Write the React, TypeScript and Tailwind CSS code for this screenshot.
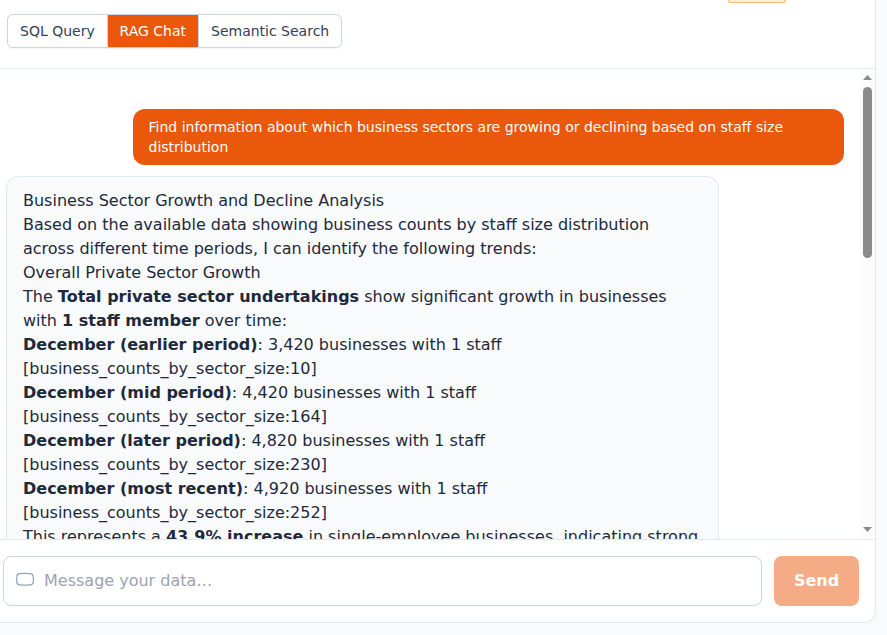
import type { ReactNode } from "react";

const tabs = [
  { label: "SQL Query", className: "w-[100px] border-r pl-3 text-[#334155]" },
  { label: "RAG Chat", className: "w-[91px] border-r bg-[#ea580c] pl-[11.5px] text-white" },
  { label: "Semantic Search", className: "flex-1 pl-3 text-[#334155]" },
];

const lines: ReactNode[] = [
  "Business Sector Growth and Decline Analysis",
  "Based on the available data showing business counts by staff size distribution across different time periods, I can identify the following trends:",
  "Overall Private Sector Growth",
  <>The <b>Total private sector undertakings</b> show significant growth in businesses with <b>1 staff member</b> over time:</>,
  <><b>December (earlier period)</b>: 3,420 businesses with 1 staff [business_counts_by_sector_size:10]</>,
  <><b>December (mid period)</b>: 4,420 businesses with 1 staff [business_counts_by_sector_size:164]</>,
  <><b>December (later period)</b>: 4,820 businesses with 1 staff [business_counts_by_sector_size:230]</>,
  <><b>December (most recent)</b>: 4,920 businesses with 1 staff [business_counts_by_sector_size:252]</>,
  <>This represents a <b>43.9% increase</b> in single-employee businesses, indicating strong</>,
];

function Scrollbar() {
  return (
    <div className="flex w-[15px] shrink-0 flex-col items-center bg-[#fcfcfc] pt-1.5 pb-[7px]">
      <svg width="9" height="5" viewBox="0 0 9 5" className="block shrink-0" fill="#8b8b8b">
        <path d="M4.5 0L9 5H0z" />
      </svg>
      <div className="mt-[7px] h-[171px] w-[9px] rounded-full bg-[#8b8b8b]" />
      <svg width="9" height="5" viewBox="0 0 9 5" className="mt-auto block shrink-0" fill="#8b8b8b">
        <path d="M4.5 5L0 0H9z" />
      </svg>
    </div>
  );
}

export default function App() {
  return (
    <div className="h-[635px] w-[887px] overflow-hidden bg-[#f8fafc] font-['DejaVu_Sans',sans-serif]">
      <div className="flex h-[623px] w-[876px] flex-col overflow-hidden rounded-br-xl border-r border-b border-[#e2e8f0] bg-white">
        <header className="h-[69px] shrink-0 border-b border-[#e2e8f0]">
          <div className="flex h-3.5 justify-end pr-[89px]">
            <div className="h-[3px] w-[58px] overflow-hidden rounded-b-md border border-t-0 border-[#fdba74] bg-[#ffedd5]" />
          </div>
          <div className="ml-[7px] flex h-[34px] w-[335px] overflow-hidden rounded-md border border-[#cbd5e1] bg-white shadow-[0_1px_2px_0_rgb(0_0_0/0.05)]">
            {tabs.map((t) => (
              <button key={t.label} className={`border-[#cbd5e1] text-left text-sm whitespace-nowrap ${t.className}`}>
                {t.label}
              </button>
            ))}
          </div>
        </header>
        <main className="flex h-[470px] shrink-0">
          <div className="flex min-w-0 flex-1 flex-col overflow-hidden pt-10 pr-4 pl-1.5">
            <div className="h-14 w-[711px] shrink-0 self-end rounded-xl bg-[#ea580c] py-2 pr-4 pl-[15.5px] text-sm leading-5 text-white">
              Find information about which business sectors are growing or declining based on staff size distribution
            </div>
            <div className="mt-[11px] h-[500px] w-[713px] shrink-0 rounded-xl border border-[#e2e8f0] bg-[#f8fafc] px-4 py-3 text-base leading-6 text-[#1e293b]">
              {lines.map((l, i) => (
                <p key={i}>{l}</p>
              ))}
            </div>
          </div>
          <Scrollbar />
        </main>
        <footer className="flex flex-1 gap-3 border-t border-[#e2e8f0] py-4 pr-4 pl-[3px]">
          <div className="flex h-[50px] flex-1 items-center rounded-lg border border-[#cbd5e1] pl-3">
            <svg width="18" height="14" viewBox="0 0 18 14" fill="none" stroke="#94a3b8" className="mr-2.5 mb-1">
              <path d="M3.7 1.6Q9 1 14.3 1.6Q17 1.8 17.2 4.5Q17.5 7.2 17.2 9.9Q17 12.6 14.3 12.8Q9 13.3 3.7 12.8Q1 12.6 .8 9.9Q.5 7.2 .8 4.5Q1 1.8 3.7 1.6Z" strokeWidth="1.2" />
            </svg>
            <span className="text-base text-[#9ca3af]">Message your data…</span>
          </div>
          <button className="h-[50px] w-[85px] rounded-lg bg-[#f5ab85] text-base font-bold text-white">Send</button>
        </footer>
      </div>
    </div>
  );
}
